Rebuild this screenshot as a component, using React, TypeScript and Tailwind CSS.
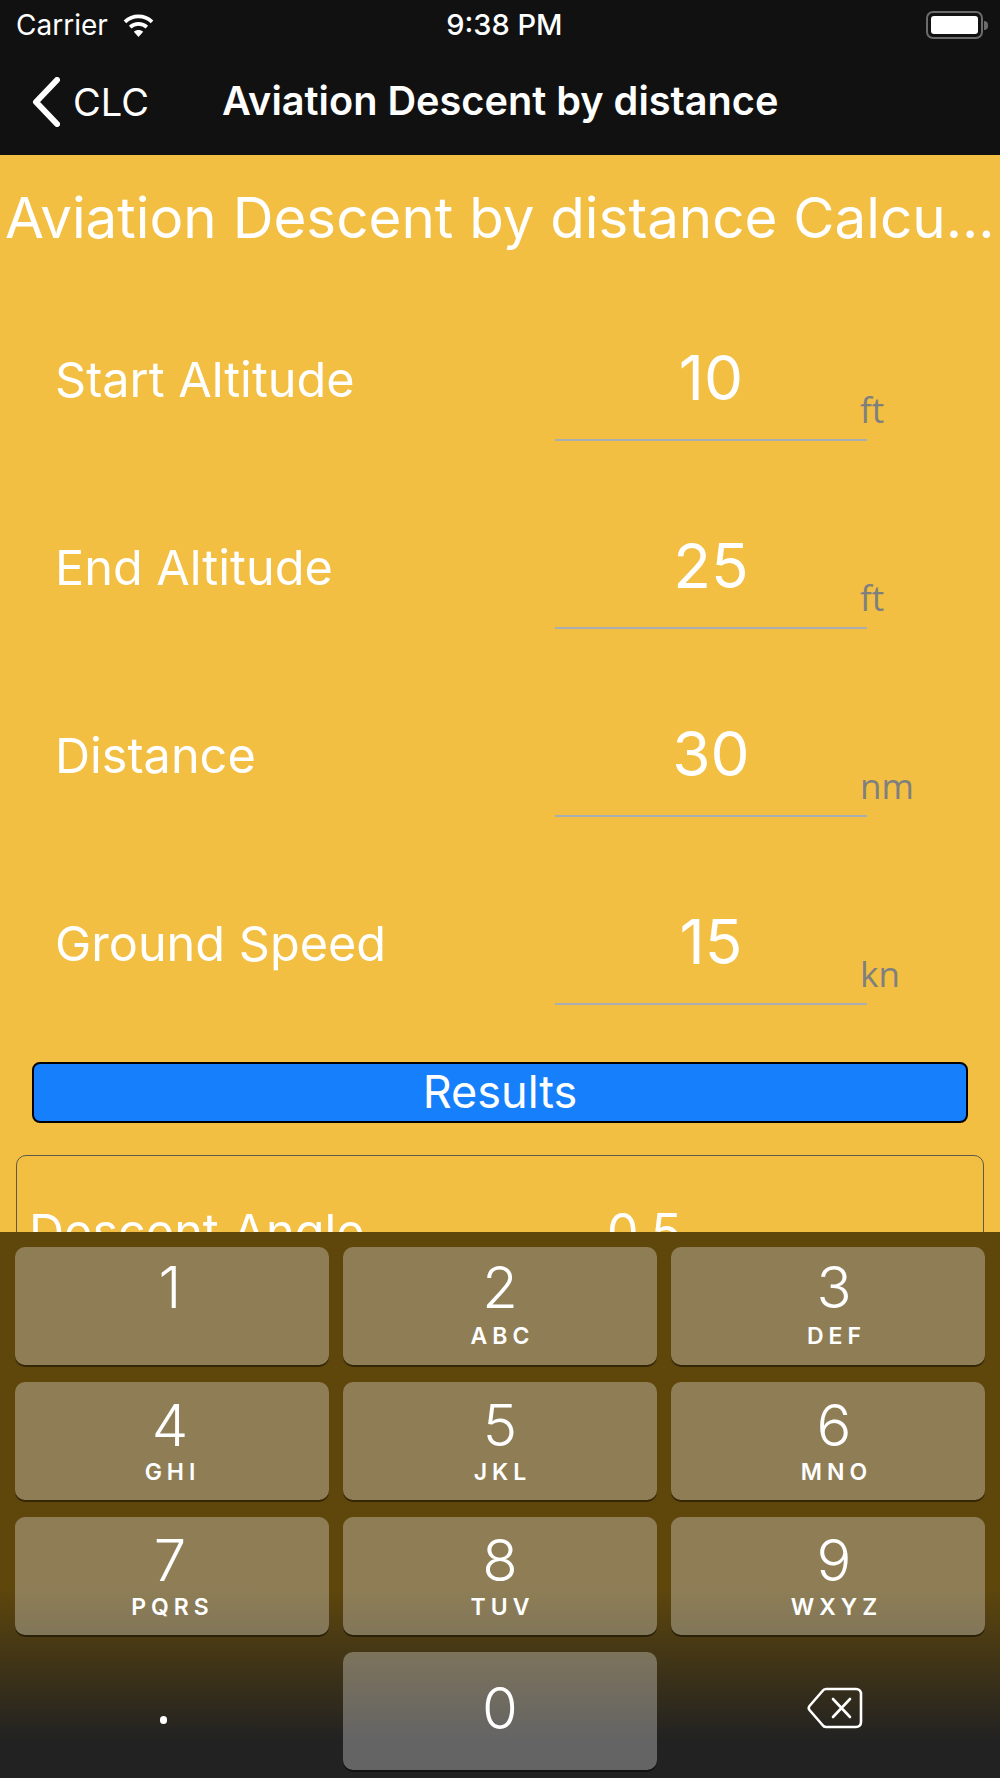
const fields = [
  { label: "Start Altitude", value: "10", unit: "ft" },
  { label: "End Altitude", value: "25", unit: "ft" },
  { label: "Distance", value: "30", unit: "nm" },
  { label: "Ground Speed", value: "15", unit: "kn" },
];

const keys = [
  { digit: "1", letters: "" },
  { digit: "2", letters: "ABC" },
  { digit: "3", letters: "DEF" },
  { digit: "4", letters: "GHI" },
  { digit: "5", letters: "JKL" },
  { digit: "6", letters: "MNO" },
  { digit: "7", letters: "PQRS" },
  { digit: "8", letters: "TUV" },
  { digit: "9", letters: "WXYZ" },
];

function WifiIcon() {
  return (
    <svg width="33" height="25" viewBox="0 0 30 24" fill="none" stroke="white" strokeWidth="3.6">
      <path d="M2 8.5C9.5 1.5 20.5 1.5 28 8.5" />
      <path d="M7 13.5C11.5 9.5 18.5 9.5 23 13.5" />
      <path d="M15 23L10.5 18C13 15.8 17 15.8 19.5 18Z" fill="white" stroke="none" />
    </svg>
  );
}

function BatteryIcon() {
  return (
    <div className="flex items-center">
      <div className="flex h-[28px] w-[57px] items-center rounded-[7px] border-2 border-[#6b6b6b] p-[3px]">
        <div className="h-full w-full rounded-[3px] bg-white" />
      </div>
      <div className="ml-[1px] h-[9px] w-[4px] rounded-r-full bg-[#6b6b6b]" />
    </div>
  );
}

function BackspaceIcon() {
  return (
    <svg width="56" height="42" viewBox="0 0 56 42" fill="none" stroke="white" strokeWidth="2.6" strokeLinejoin="round" strokeLinecap="round">
      <path d="M19 2H49C52 2 54 4 54 7V35C54 38 52 40 49 40H19C17.5 40 16.5 39.5 15.5 38L2.5 23C1.5 21.7 1.5 20.3 2.5 19L15.5 4C16.5 2.5 17.5 2 19 2Z" />
      <path d="M26 12L43 30M43 12L26 30" />
    </svg>
  );
}

function Key({ digit, letters, index }: { digit: string; letters: string; index: number }) {
  const topRow = index < 3;
  const col = index % 3;
  return (
    <div className="flex h-[118px] flex-col items-center rounded-[10px] bg-white/30 shadow-[0_2px_0_rgba(0,0,0,0.45)]">
      <div className={`flex flex-col items-center ${col === 2 ? "translate-x-[6px]" : col === 0 ? "-translate-x-[2px]" : ""}`}>
        <span className={`h-[58px] text-[58px] leading-[58px] font-light text-white ${topRow ? "mt-[11px]" : "mt-[14px]"}`}>
          {digit}
        </span>
        {letters && (
          <span className={`pl-[5px] text-[23px] leading-[26px] font-semibold tracking-[5px] text-white ${topRow ? "mt-[7px]" : "mt-[5px]"}`}>
            {letters}
          </span>
        )}
      </div>
    </div>
  );
}

export default function App() {
  return (
    <div className="flex h-[1778px] w-[1000px] flex-col overflow-hidden bg-[#f2bf43] font-['Inter','Liberation_Sans',sans-serif]">
      {/* status + nav bar */}
      <div className="h-[155px] shrink-0 bg-[#111111] text-white">
        <div className="flex h-[50px] items-center justify-between pr-[12px] pl-[16px]">
          <div className="flex items-center gap-[14px]">
            <span className="text-[28px]">Carrier</span>
            <WifiIcon />
          </div>
          <span className="-ml-[72px] text-[29px] font-medium">9:38 PM</span>
          <BatteryIcon />
        </div>
        <div className="flex h-[104px] items-center pl-[32px]">
          <svg width="28" height="50" viewBox="0 0 28 50" fill="none" stroke="white" strokeWidth="6" strokeLinecap="round" strokeLinejoin="round">
            <path d="M25 3L4 25L25 47" />
          </svg>
          <span className="ml-[13px] text-[38px]">CLC</span>
          <span className="ml-[73px] text-[39.7px] font-semibold">Aviation Descent by distance</span>
        </div>
      </div>

      {/* form */}
      <div className="min-h-0 flex-1 overflow-hidden">
        <h1 className="mt-[29px] px-[5px] text-[56.5px] leading-[68px] font-normal whitespace-nowrap text-white">
          Aviation Descent by distance Calcu...
        </h1>
        <div className="mt-[89px] flex flex-col gap-[88px] pl-[55px]">
          {fields.map((f) => (
            <div key={f.label} className="flex h-[100px] items-start">
              <span className="mt-[11px] w-[500px] text-[48.6px] leading-[56px] text-white">{f.label}</span>
              <div className="h-[100px] w-[312px] border-b-2 border-[#a9aeb5] pt-[1px] text-center text-[62px] leading-[72px] text-white">
                {f.value}
              </div>
              <span className="mt-[49px] -ml-[7px] font-['Open_Sans',sans-serif] text-[35px] leading-[40px] text-[#7f7f7f]">{f.unit}</span>
            </div>
          ))}
        </div>
        <div className="mx-[32px] mt-[57px] h-[61px] rounded-[8px] border-2 border-black bg-[#1680fc] text-center text-[45px] leading-[55px] text-white">
          Results
        </div>
        <div className="mx-[16px] mt-[32px] h-[300px] rounded-[10px] border border-[#5e5a4a] pt-[48px] pl-[12px]">
          <div className="flex items-center text-[48.6px] leading-[56px] text-white">
            <span className="w-[578px]">Descent Angle</span>
            <span className="text-[50px]">0.5</span>
          </div>
        </div>
      </div>

      {/* number pad */}
      <div className="h-[546px] shrink-0 bg-[linear-gradient(to_bottom,#5f470c_0%,#5f470c_65%,#222222_93%,#222222_100%)] px-[15px] pt-[15px]">
        <div className="grid grid-cols-3 gap-x-[14px] gap-y-[17px]">
          {keys.map((k, i) => (
            <Key key={k.digit} digit={k.digit} letters={k.letters} index={i} />
          ))}
          <div className="flex h-[118px] items-center justify-center pt-[18px]">
            <span className="block h-[8px] w-[7px] -translate-x-[9px] rounded-full bg-white" />
          </div>
          <div className="flex h-[118px] flex-col items-center justify-center rounded-[10px] bg-white/30 pb-[6px] shadow-[0_2px_0_rgba(0,0,0,0.45)]">
            <span className="text-[58px] leading-[58px] font-light text-white">0</span>
          </div>
          <div className="flex h-[118px] translate-x-[7px] items-center justify-center pb-[6px]">
            <BackspaceIcon />
          </div>
        </div>
      </div>
    </div>
  );
}
